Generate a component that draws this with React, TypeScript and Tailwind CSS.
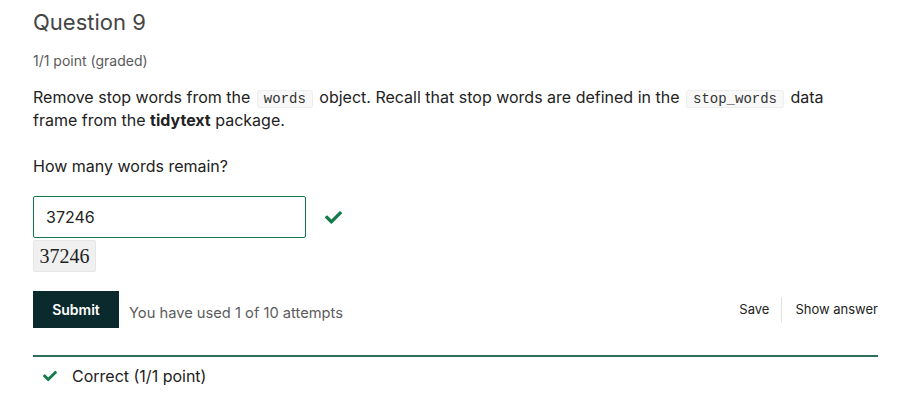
const Check = ({ className }: { className?: string }) => (
    <svg viewBox="0 0 512 512" className={className} fill="currentColor">
        <path d="M173.9 439.4l-166.4-166.4c-10-10-10-26.2 0-36.2l36.2-36.2c10-10 26.2-10 36.2 0L192 312.7 432.1 72.6c10-10 26.2-10 36.2 0l36.2 36.2c10 10 10 26.2 0 36.2L210.1 439.4c-10 10-26.2 10-36.2 0z" />
    </svg>
);

const Code = ({ children }: { children: string }) => (
    <code className="mx-[2px] rounded-[3px] border border-[#eeeeee] bg-[#f8f8f8] px-[6px] py-0 font-['Courier_New','Liberation_Mono',monospace] text-[14px] leading-[14px] text-[#333]">
        {children}
    </code>
);

export default function App() {
    return (
        <div className="w-[904px] h-[404px] bg-white font-['Inter',sans-serif] text-[#222] pl-[33px] pr-[26px] pt-[8px]">
            <h2 className="text-[22px] leading-[28px] text-[#454545]">Question 9</h2>
            <div className="mt-[17px] text-[14px] leading-[16px] text-[#5a5a5a]">1/1 point (graded)</div>

            <p className="mt-[17px] w-[805px] text-[16px] leading-[23px]">
                Remove stop words from the <Code>words</Code> object. Recall that stop words are defined in the{' '}
                <Code>stop_words</Code> data frame from the <b>tidytext</b> package.
            </p>

            <p className="mt-[23px] text-[16px] leading-[23px]">How many words remain?</p>

            <div className="mt-[18px] flex items-center">
                <div className="w-[273px] h-[42px] border border-[#137a4b] rounded-[2px] flex items-center px-[12px] text-[16px]">
                    37246
                </div>
                <Check className="ml-[19px] w-[17px] h-[17px] text-[#137a4b]" />
            </div>
            <div className="mt-[2px] w-[63px] h-[32px] rounded-[2px] bg-[#f0f0f0] border border-[#e6e6e6] flex items-center justify-center font-['Liberation_Serif',serif] text-[20px] text-[#222]">
                37246
            </div>

            <div className="mt-[19px] flex items-center">
                <button className="w-[86px] h-[37px] bg-[#0a2a2e] text-white text-[14px] font-semibold">Submit</button>
                <span className="ml-[10px] mt-[8px] text-[14.7px] text-[#5c5c5c]">You have used 1 of 10 attempts</span>
                <div className="ml-auto flex items-center text-[13px] text-[#222]">
                    <span className="pr-[12px]">Save</span>
                    <span className="w-px h-[25px] bg-[#e2e2e2]" />
                    <span className="pl-[13px]">Show answer</span>
                </div>
            </div>

            <div className="mt-[27px] h-[2px] bg-[#2e6f58]" />
            <div className="mt-[7px] flex items-center pl-[10px]">
                <Check className="w-[14px] h-[14px] text-[#137a4b]" />
                <span className="ml-[15px] text-[16px]">Correct (1/1 point)</span>
            </div>
        </div>
    );
}
